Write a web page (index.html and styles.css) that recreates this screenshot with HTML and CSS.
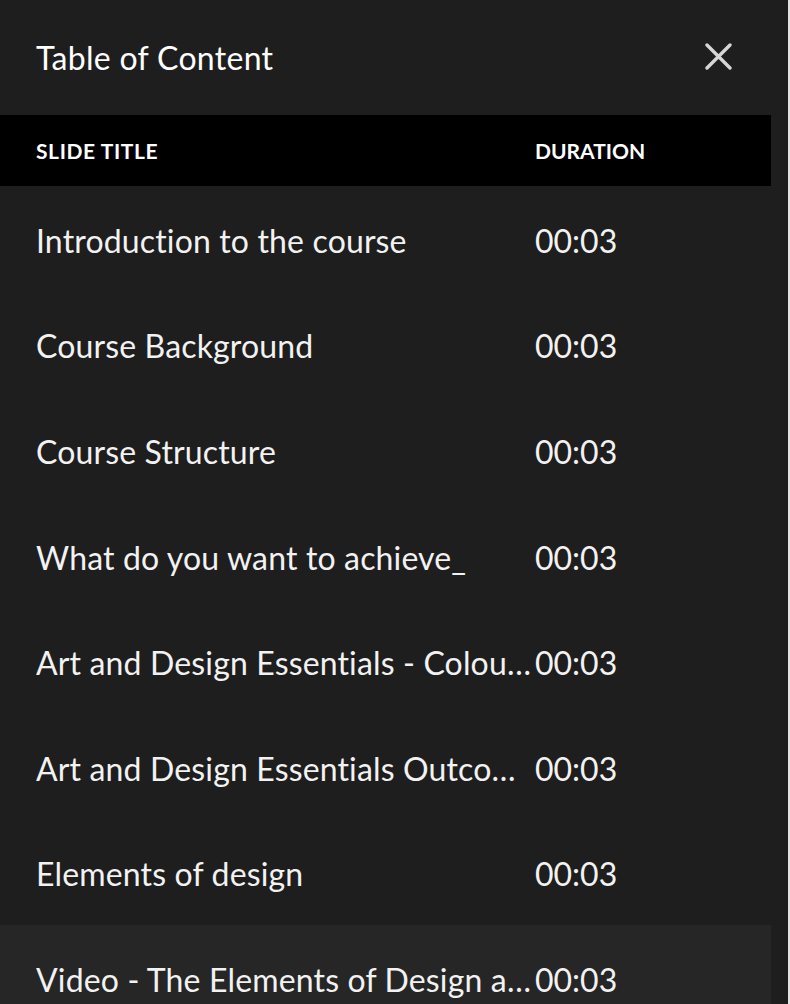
FILE: index.html
```html
<!DOCTYPE html>
<html lang="en">
<head>
<meta charset="utf-8">
<title>Table of Content</title>
<link rel="stylesheet" href="styles.css">
</head>
<body>
<div class="panel">
  <div class="top">
    <h1 class="title">Table of Content</h1>
    <button class="close" aria-label="Close">
      <svg width="27" height="27" viewBox="0 0 27 27"><path d="M2 2 L25 25 M25 2 L2 25" stroke="#d6d6d6" stroke-width="3.4" stroke-linecap="round" fill="none"/></svg>
    </button>
  </div>
  <div class="thead">
    <div class="col-title">SLIDE TITLE</div>
    <div class="col-dur">DURATION</div>
  </div>
  <div class="rows">
    <div class="row"><div class="col-title">Introduction to the course</div><div class="col-dur">00:03</div></div>
    <div class="row"><div class="col-title">Course Background</div><div class="col-dur">00:03</div></div>
    <div class="row"><div class="col-title">Course Structure</div><div class="col-dur">00:03</div></div>
    <div class="row"><div class="col-title">What do you want to achieve_</div><div class="col-dur">00:03</div></div>
    <div class="row"><div class="col-title">Art and Design Essentials - Colour Theory</div><div class="col-dur">00:03</div></div>
    <div class="row"><div class="col-title">Art and Design Essentials Outcomes</div><div class="col-dur">00:03</div></div>
    <div class="row"><div class="col-title">Elements of design</div><div class="col-dur">00:03</div></div>
    <div class="row active"><div class="col-title">Video - The Elements of Design and Principles</div><div class="col-dur">00:03</div></div>
  </div>
</div>
</body>
</html>
```
FILE: styles.css
```css
html, body {
  margin: 0;
  padding: 0;
  background: #1e1e1e;
  height: 100%;
  overflow: hidden;
}
body {
  font-family: Lato, "Open Sans", sans-serif;
  color: #f2f2f2;
  box-sizing: border-box;
  border-right: 2px solid #e2e2e2;
}
.panel {
  width: 771px;
}
.top {
  height: 115px;
  box-sizing: border-box;
  display: flex;
  justify-content: space-between;
  align-items: flex-start;
  padding: 0 39px 0 36px;
}
.title {
  margin: 0;
  padding-top: 38px;
  font-size: 32px;
  font-weight: 400;
  line-height: 40px;
  color: #fff;
  letter-spacing: 0.3px;
}
.close {
  margin-top: 43px;
  padding: 0;
  border: 0;
  background: none;
  width: 27px;
  height: 27px;
  display: block;
}
.close svg { display: block; }
.thead {
  height: 71px;
  background: #000;
  display: flex;
  align-items: center;
  padding-left: 36px;
  font-size: 21px;
  font-weight: 700;
  color: #fff;
  letter-spacing: 0.6px;
}
.col-title {
  width: 499px;
  flex: none;
  white-space: nowrap;
  overflow: hidden;
  text-overflow: ellipsis;
}
.col-dur {
  flex: none;
  letter-spacing: 0;
}
.row {
  height: 105.6px;
  display: flex;
  align-items: center;
  padding-left: 36px;
  font-size: 32px;
  color: #f2f2f2;
  letter-spacing: 0.15px;
}
.row .col-title,
.row .col-dur {
  padding-top: 3px;
}
.row.active {
  background: #262626;
}
```
